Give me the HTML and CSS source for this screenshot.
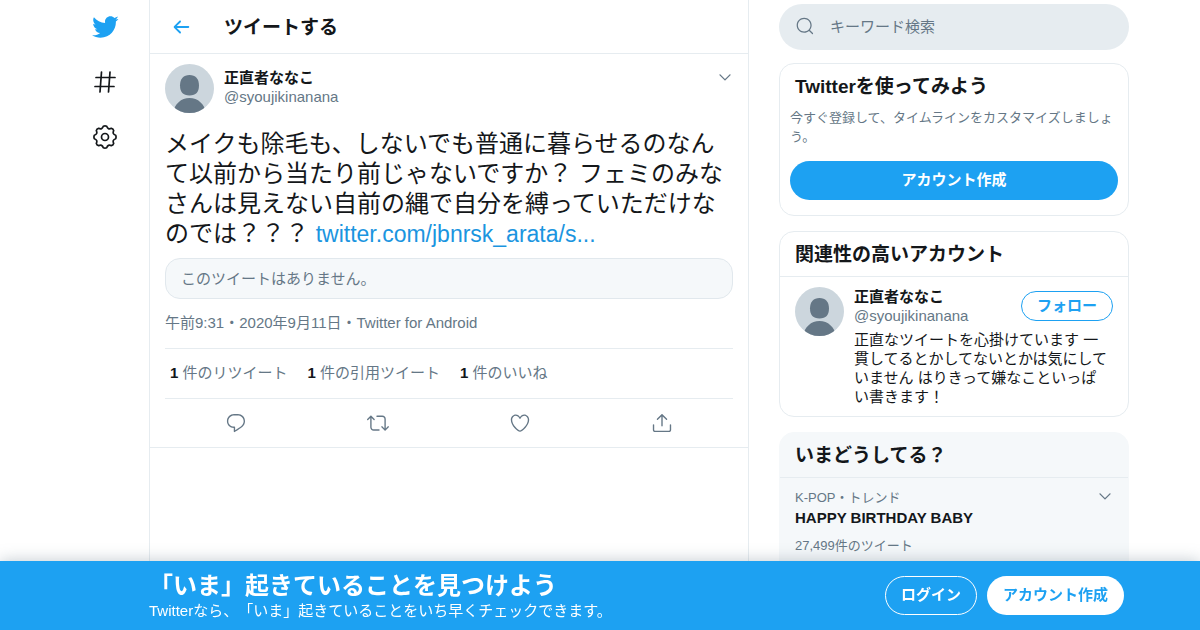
FILE: index.html
```html
<!DOCTYPE html>
<html lang="ja">
<head>
    <meta charset="UTF-8">
    <meta name="viewport" content="width=device-width, initial-scale=1.0">
    <title>ツイートする</title>
    <link rel="stylesheet" href="styles.css">
</head>
<body>

    <svg class="sprite" aria-hidden="true">
        <symbol id="chevron" viewBox="0 0 24 24">
            <path d="M20.207 8.147c-.39-.39-1.023-.39-1.414 0L12 14.94 5.207 8.147c-.39-.39-1.023-.39-1.414 0-.39.39-.39 1.023 0 1.414l7.5 7.5c.195.196.45.294.707.294s.512-.098.707-.293l7.5-7.5c.39-.39.39-1.022 0-1.413z"/>
        </symbol>
        <symbol id="person" viewBox="0 0 49 49">
            <rect width="49" height="49" fill="#ccd6dd"/>
            <path d="M24.5 11c6 0 9.500 4 9.500 10.500 0 6.500-3 10-9.500 10s-9.500-3.500-9.500-10C15 15 18.500 11 24.500 11z" fill="#657786"/>
            <path d="M8 49c1.500-9 8-15 16.500-15S39.500 40 41 49z" fill="#657786"/>
        </symbol>
    </svg>

    <div class="layout">
        <nav class="nav">
            <a href="#" aria-label="Twitter">
                <svg class="logo" viewBox="0 0 24 24"><path d="M23.643 4.937c-.835.37-1.732.62-2.675.733.962-.576 1.7-1.49 2.048-2.578-.9.534-1.897.922-2.958 1.13-.85-.904-2.06-1.47-3.4-1.47-2.572 0-4.658 2.086-4.658 4.66 0 .364.042.718.12 1.06-3.873-.195-7.304-2.05-9.602-4.868-.4.69-.63 1.49-.63 2.342 0 1.616.823 3.043 2.072 3.878-.764-.025-1.482-.234-2.11-.583v.06c0 2.257 1.605 4.14 3.737 4.568-.392.106-.803.162-1.227.162-.3 0-.593-.028-.877-.082.593 1.85 2.313 3.198 4.352 3.234-1.595 1.25-3.604 1.995-5.786 1.995-.376 0-.747-.022-1.112-.065 2.062 1.323 4.51 2.093 7.14 2.093 8.57 0 13.255-7.098 13.255-13.254 0-.2-.005-.402-.014-.602.91-.658 1.7-1.477 2.323-2.41z"/></svg>
            </a>
            <a href="#" aria-label="話題を検索">
                <svg class="nav-icon" viewBox="0 0 24 24"><path d="M8.500 2L7 22M17 2L15.500 22M3 7.500H22M2 16.500H21"/></svg>
            </a>
            <a href="#" aria-label="設定">
                <svg class="nav-icon" viewBox="0 0 24 24"><circle cx="12" cy="12" r="3.500"/><path d="M22.700 10.300Q23.400 12 22.700 13.700 19 14.900 20.700 18.400 20.300 20.300 18.400 20.700 14.900 19 13.700 22.700 12 23.400 10.300 22.700 9.100 19 5.600 20.700 3.700 20.300 3.300 18.400 5 14.900 1.300 13.700.600 12 1.300 10.300 5 9.100 3.300 5.600 3.700 3.700 5.600 3.300 9.100 5 10.300 1.300 12 .600 13.700 1.300 14.900 5 18.400 3.300 20.300 3.700 20.700 5.600 19 9.100 22.700 10.300z"/></svg>
            </a>
        </nav>

        <main class="main">
            <header class="top-bar">
                <a href="#" class="back" aria-label="戻る">
                    <svg viewBox="0 0 24 24"><path d="M20 11H7.414l4.293-4.293c.39-.39.39-1.023 0-1.414s-1.023-.39-1.414 0l-6 6c-.39.39-.39 1.023 0 1.414l6 6c.195.195.45.293.707.293s.512-.098.707-.293c.39-.39.39-1.023 0-1.414L7.414 13H20c.553 0 1-.447 1-1s-.447-1-1-1z"/></svg>
                </a>
                <h1>ツイートする</h1>
            </header>

            <article class="tweet">
                <div class="author">
                    <svg class="avatar"><use href="#person"/></svg>
                    <div class="names">
                        <a href="#" class="name">正直者ななこ</a>
                        <span class="handle">@syoujikinanana</span>
                    </div>
                    <button type="button" class="more" aria-label="もっと見る"><svg><use href="#chevron"/></svg></button>
                </div>
                <p class="tweet-text">メイクも除毛も、しないでも普通に暮らせるのなんて以前から当たり前じゃないですか？ フェミのみなさんは見えない自前の縄で自分を縛っていただけなのでは？？？ <a href="#">twitter.com/jbnrsk_arata/s...</a></p>
                <div class="missing">このツイートはありません。</div>
                <p class="meta">午前9:31・2020年9月11日・Twitter for Android</p>
                <div class="stats">
                    <a href="#"><b>1</b> 件のリツイート</a>
                    <a href="#"><b>1</b> 件の引用ツイート</a>
                    <a href="#"><b>1</b> 件のいいね</a>
                </div>
                <div class="actions">
                    <button type="button" aria-label="返信">
                        <svg viewBox="0 0 24 24"><path d="M14.046 2.242l-4.148-.01h-.002c-4.374 0-7.8 3.427-7.8 7.802 0 4.098 3.186 7.206 7.465 7.37v3.828c0 .108.044.286.12.403.142.225.384.347.632.347.138 0 .277-.038.402-.118.264-.168 6.473-4.14 8.088-5.506 1.902-1.61 3.04-3.97 3.043-6.312v-.017c-.006-4.367-3.43-7.787-7.8-7.788zm3.787 12.972c-1.134.96-4.862 3.405-6.772 4.643V16.67c0-.414-.335-.75-.75-.75h-.396c-3.66 0-6.318-2.476-6.318-5.886 0-3.534 2.768-6.302 6.3-6.302l4.147.01h.002c3.532 0 6.3 2.766 6.302 6.296-.003 1.91-.942 3.844-2.514 5.176z"/></svg>
                    </button>
                    <button type="button" aria-label="リツイート">
                        <svg viewBox="0 0 24 24"><path d="M23.77 15.67c-.292-.293-.767-.293-1.06 0l-2.22 2.22V7.65c0-2.068-1.683-3.75-3.75-3.75h-5.85c-.414 0-.75.336-.75.75s.336.75.75.75h5.85c1.24 0 2.25 1.01 2.25 2.25v10.24l-2.22-2.22c-.293-.293-.768-.293-1.06 0s-.294.768 0 1.06l3.5 3.5c.145.147.337.22.53.22s.383-.072.53-.22l3.5-3.5c.294-.292.294-.767 0-1.06zm-10.66 3.28H7.26c-1.24 0-2.25-1.01-2.25-2.25V6.46l2.22 2.22c.148.147.34.22.532.22s.384-.073.53-.22c.293-.293.293-.768 0-1.06l-3.5-3.5c-.293-.294-.768-.294-1.06 0l-3.5 3.5c-.294.292-.294.767 0 1.06s.767.293 1.06 0l2.22-2.22V16.7c0 2.068 1.683 3.75 3.75 3.75h5.85c.414 0 .75-.336.75-.75s-.337-.75-.75-.75z"/></svg>
                    </button>
                    <button type="button" aria-label="いいね">
                        <svg viewBox="0 0 24 24"><path d="M12 21.638h-.014C9.403 21.59 1.95 14.856 1.95 8.478c0-3.064 2.525-5.754 5.403-5.754 2.29 0 3.83 1.58 4.646 2.73.814-1.148 2.354-2.73 4.645-2.73 2.88 0 5.404 2.69 5.404 5.755 0 6.376-7.454 13.11-10.037 13.157H12zM7.354 4.225c-2.08 0-3.903 1.988-3.903 4.255 0 5.74 7.034 11.596 8.55 11.658 1.518-.062 8.55-5.917 8.55-11.658 0-2.267-1.823-4.255-3.903-4.255-2.528 0-3.94 2.936-3.952 2.965-.23.562-1.156.562-1.387 0-.014-.03-1.425-2.965-3.954-2.965z"/></svg>
                    </button>
                    <button type="button" aria-label="共有">
                        <svg viewBox="0 0 24 24"><path d="M17.53 7.47l-5-5c-.293-.293-.768-.293-1.06 0l-5 5c-.294.293-.294.768 0 1.06s.767.294 1.06 0l3.72-3.72V15c0 .414.336.75.75.75s.75-.336.75-.75V4.81l3.72 3.72c.146.147.338.22.53.22s.384-.072.53-.22c.293-.293.293-.767 0-1.06z"/><path d="M19.708 21.944H4.292C3.028 21.944 2 20.916 2 19.652V14c0-.414.336-.75.75-.75s.75.336.75.75v5.652c0 .437.355.792.792.792h15.416c.437 0 .792-.355.792-.792V14c0-.414.336-.75.75-.75s.75.336.75.75v5.652c0 1.264-1.028 2.292-2.292 2.292z"/></svg>
                    </button>
                </div>
            </article>
        </main>

        <aside class="sidebar">
            <label class="search">
                <svg viewBox="0 0 24 24" aria-hidden="true"><path d="M21.53 20.47l-3.66-3.66C19.195 15.24 20 13.214 20 11c0-4.97-4.03-9-9-9s-9 4.03-9 9 4.03 9 9 9c2.215 0 4.24-.804 5.808-2.13l3.66 3.66c.147.146.34.22.53.22s.385-.073.53-.22c.295-.293.295-.767.002-1.06zM3.5 11c0-4.135 3.365-7.5 7.5-7.5s7.5 3.365 7.5 7.5-3.365 7.5-7.5 7.5-7.5-3.365-7.5-7.5z"/></svg>
                <input type="text" placeholder="キーワード検索" aria-label="キーワード検索">
            </label>

            <section class="card signup">
                <h2>Twitterを使ってみよう</h2>
                <p>今すぐ登録して、タイムラインをカスタマイズしましょう。</p>
                <button type="button" class="btn btn-blue">アカウント作成</button>
            </section>

            <section class="card">
                <h2 class="ruled">関連性の高いアカウント</h2>
                <div class="account">
                    <svg class="avatar"><use href="#person"/></svg>
                    <div class="account-body">
                        <div class="account-head">
                            <div class="names">
                                <a href="#" class="name">正直者ななこ</a>
                                <span class="handle">@syoujikinanana</span>
                            </div>
                            <button type="button" class="btn btn-follow">フォロー</button>
                        </div>
                        <p class="bio">正直なツイートを心掛けています 一貫してるとかしてないとかは気にしていません はりきって嫌なこといっぱい書きます！</p>
                    </div>
                </div>
            </section>

            <section class="card trends">
                <h2 class="ruled">いまどうしてる？</h2>
                <div class="trend">
                    <div class="trend-head">
                        <span>K-POP・トレンド</span>
                        <button type="button" class="more" aria-label="もっと見る"><svg><use href="#chevron"/></svg></button>
                    </div>
                    <a href="#" class="trend-name">HAPPY BIRTHDAY BABY</a>
                    <span>27,499件のツイート</span>
                </div>
            </section>
        </aside>
    </div>

    <footer class="banner">
        <div class="banner-inner">
            <div class="banner-text">
                <strong>「いま」起きていることを見つけよう</strong>
                <span>Twitterなら、「いま」起きていることをいち早くチェックできます。</span>
            </div>
            <button type="button" class="btn btn-outline">ログイン</button>
            <button type="button" class="btn btn-white">アカウント作成</button>
        </div>
    </footer>

</body>
</html>
```
FILE: styles.css
```css
* {
    box-sizing: border-box;
}
body {
    margin: 0;
    font-family: "Liberation Sans", "Noto Sans CJK JP", sans-serif;
    font-size: 15px;
    line-height: 19px;
    text-spacing-trim: space-all;
    color: #14171a;
    background: #fff;
}
h1, h2, p {
    margin: 0;
}
h1, h2 {
    font-size: 19px;
    line-height: 25px;
}
a {
    color: inherit;
    text-decoration: none;
}
button {
    font: inherit;
    cursor: pointer;
}
svg {
    display: block;
    fill: currentColor;
}
.sprite {
    display: none;
}
.layout {
    display: flex;
    max-width: 1058px;
    min-height: 100vh;
    margin: 0 auto;
}

/* left navigation */
.nav {
    display: flex;
    flex-direction: column;
    gap: 1px;
    width: 78px;
    padding-right: 10px;
}
.nav a {
    display: flex;
    align-items: center;
    justify-content: center;
    height: 54px;
}
.logo {
    width: 28px;
    height: 28px;
    color: #1da1f2;
}
.nav-icon {
    width: 24px;
    height: 24px;
    fill: none;
    stroke: currentColor;
    stroke-width: 1.7;
    stroke-linecap: round;
    stroke-linejoin: round;
}

/* tweet column */
.main {
    flex: 1;
    max-width: 600px;
    border-left: 1px solid #e6ecf0;
    border-right: 1px solid #e6ecf0;
}
.top-bar {
    display: flex;
    align-items: center;
    height: 54px;
    padding: 0 15px;
    border-bottom: 1px solid #e6ecf0;
}
.top-bar h1 {
    padding-top: 2px;
}
.back {
    width: 59px;
    padding-left: 5px;
    color: #1da1f2;
}
.back svg {
    width: 22px;
    height: 22px;
}
.tweet {
    padding: 10px 15px 0;
    border-bottom: 1px solid #e6ecf0;
}
.author {
    display: flex;
    gap: 10px;
}
.avatar {
    flex: none;
    width: 49px;
    height: 49px;
    border-radius: 50%;
}
.names {
    flex: 1;
    display: flex;
    flex-direction: column;
}
.author .names {
    padding-top: 4px;
}
.name {
    font-weight: bold;
}
.handle, .meta, .stats, .actions, .missing, .trend span {
    color: #657786;
}
.more {
    align-self: flex-start;
    padding: 0;
    border: none;
    background: none;
    color: #657786;
}
.author .more {
    padding-top: 5px;
}
.more svg {
    width: 16px;
    height: 16px;
}
.tweet-text {
    margin-top: 16px;
    font-size: 24px;
    line-height: 30px;
}
.tweet-text a {
    font-size: 23px;
    color: #1b95e0;
}
.missing {
    margin-top: 9px;
    padding: 10px 15px;
    border: 1px solid #e1e8ed;
    border-radius: 15px;
    background: #f5f8fa;
}
.meta {
    padding: 14px 0 16px;
}
.stats {
    display: flex;
    gap: 20px;
    padding: 14px 5px 16px;
    border-top: 1px solid #e6ecf0;
    border-bottom: 1px solid #e6ecf0;
}
.stats b {
    color: #14171a;
}
.actions {
    display: grid;
    grid-template-columns: repeat(4, 1fr);
    justify-items: center;
    height: 48px;
}
.actions button {
    padding: 0;
    border: none;
    background: none;
    color: inherit;
}
.actions svg {
    width: 22px;
    height: 22px;
}

/* right column */
.sidebar {
    display: flex;
    flex-direction: column;
    gap: 15px;
    width: 350px;
    margin-left: 30px;
    padding-top: 4px;
}
.search {
    display: flex;
    align-items: center;
    gap: 15px;
    height: 46px;
    padding: 0 16px 2px;
    margin-bottom: -2px;
    border-radius: 23px;
    background: #e6ecf0;
    color: #657786;
}
.search svg {
    width: 20px;
    height: 20px;
}
.search input {
    flex: 1;
    padding: 0;
    border: none;
    outline: none;
    background: none;
    font: inherit;
}
.search input::placeholder {
    color: #657786;
}
.card {
    border: 1px solid #e6ecf0;
    border-radius: 15px;
}
.card h2 {
    padding: 10px 15px 9px;
}
.card .ruled {
    border-bottom: 1px solid #e6ecf0;
}
.signup {
    display: flex;
    flex-direction: column;
    padding: 0 10px 15px;
}
.signup h2 {
    padding: 10px 5px 9px;
}
.signup p {
    margin-bottom: 15px;
    font-size: 13px;
    color: #657786;
}
.btn {
    height: 39px;
    padding: 0 15px 2px;
    border: 1px solid transparent;
    border-radius: 20px;
    font-weight: bold;
    white-space: nowrap;
}
.btn-blue {
    background: #1da1f2;
    color: #fff;
}
.btn-follow {
    height: 30px;
    border-color: #1da1f2;
    background: none;
    color: #1da1f2;
}
.account {
    display: flex;
    gap: 10px;
    padding: 10px 15px;
}
.account-head {
    display: flex;
    align-items: center;
}
.bio {
    margin-top: 5px;
    padding-right: 3px;
}
.trends {
    flex: 1;
    background: #f5f8fa;
    border-color: #f5f8fa;
}
.trend {
    display: flex;
    flex-direction: column;
    padding: 10px 15px;
}
.trend span {
    font-size: 13px;
}
.trend-head {
    display: flex;
    justify-content: space-between;
}
.trend-name {
    margin: 1px 0 9px;
    font-weight: bold;
}

/* bottom login bar */
.banner {
    position: fixed;
    right: 0;
    bottom: 0;
    left: 0;
    background: #1da1f2;
    color: #fff;
    box-shadow: 0 0 15px rgba(101, 119, 134, 0.4);
}
.banner-inner {
    display: flex;
    align-items: center;
    gap: 10px;
    max-width: 1058px;
    margin: 0 auto;
    padding: 10px 5px 10px 78px;
}
.banner-text {
    flex: 1;
    display: flex;
    flex-direction: column;
}
.banner-text strong {
    font-size: 24px;
    line-height: 30px;
}
.btn-outline {
    border-color: #fff;
    background: none;
    color: #fff;
}
.btn-white {
    background: #fff;
    color: #1da1f2;
}
```
